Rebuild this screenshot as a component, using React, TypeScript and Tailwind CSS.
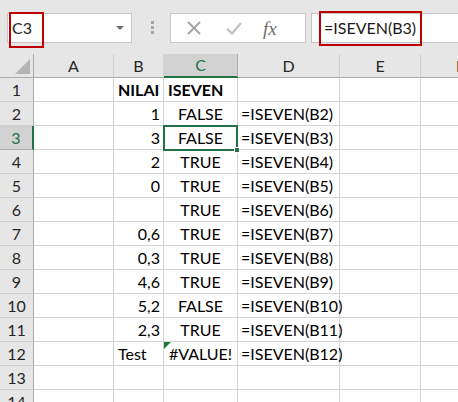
import React from "react";

type Row = {
  n: number;
  b?: string;
  bAlign?: "left" | "right";
  c?: string;
  cAlign?: "left" | "center";
  d?: string;
  bold?: boolean;
  error?: boolean;
};

const rows: Row[] = [
  { n: 1, b: "NILAI", bAlign: "left", c: "ISEVEN", cAlign: "left", bold: true },
  { n: 2, b: "1", c: "FALSE", d: "=ISEVEN(B2)" },
  { n: 3, b: "3", c: "FALSE", d: "=ISEVEN(B3)" },
  { n: 4, b: "2", c: "TRUE", d: "=ISEVEN(B4)" },
  { n: 5, b: "0", c: "TRUE", d: "=ISEVEN(B5)" },
  { n: 6, c: "TRUE", d: "=ISEVEN(B6)" },
  { n: 7, b: "0,6", c: "TRUE", d: "=ISEVEN(B7)" },
  { n: 8, b: "0,3", c: "TRUE", d: "=ISEVEN(B8)" },
  { n: 9, b: "4,6", c: "TRUE", d: "=ISEVEN(B9)" },
  { n: 10, b: "5,2", c: "FALSE", d: "=ISEVEN(B10)" },
  { n: 11, b: "2,3", c: "TRUE", d: "=ISEVEN(B11)" },
  { n: 12, b: "Test", bAlign: "left", c: "#VALUE!", d: "=ISEVEN(B12)", error: true },
  { n: 13 },
  { n: 14 },
];

const cols = ["A", "B", "C", "D", "E", "F"];

const cell = "h-6 border-r border-b border-[#d4d4d4] flex items-end pb-[3px] px-[3px] leading-none whitespace-nowrap overflow-visible";

function Toolbar() {
  return (
    <div className="h-[54px] bg-[#e6e6e6] flex items-start pt-[13px] relative">
      {/* name box */}
      <div className="ml-[7px] w-[125px] h-[30px] bg-white border border-[#c6c6c6] flex items-center pl-[4px] pr-[7px]">
        <span className="text-[16px] text-[#262626] flex-1">C3</span>
        <span className="w-0 h-0 border-l-[4px] border-r-[4px] border-t-[4px] border-l-transparent border-r-transparent border-t-[#6e6e6e]" />
      </div>
      {/* grip */}
      <div className="ml-[19px] mt-[8px] flex flex-col gap-[2px]">
        <span className="w-[3px] h-[3px] bg-[#a6a6a6]" />
        <span className="w-[3px] h-[3px] bg-[#a6a6a6]" />
        <span className="w-[3px] h-[3px] bg-[#a6a6a6]" />
      </div>
      {/* buttons */}
      <div className="ml-[16px] w-[136px] h-[30px] bg-white border border-[#c6c6c6] flex items-center">
        <svg className="ml-[16px]" width="14" height="14" viewBox="0 0 14 14">
          <path d="M1 1 L13 13 M13 1 L1 13" stroke="#a6a6a6" strokeWidth="2" fill="none" />
        </svg>
        <svg className="ml-[25px]" width="16" height="13" viewBox="0 0 16 13">
          <path d="M1 7 L6 11.5 L15 1" stroke="#c3c3c3" strokeWidth="2.4" fill="none" />
        </svg>
        <span className="ml-[21px] italic text-[19px] text-[#6e6e6e] leading-none" style={{ fontFamily: '"Liberation Serif", serif' }}>
          fx
        </span>
      </div>
      {/* formula input */}
      <div className="ml-[5px] flex-1 h-[30px] bg-white border border-[#c6c6c6] border-r-0 flex items-center pl-[12px]">
        <span className="text-[16px] text-[#1a1a1a]">=ISEVEN(B3)</span>
      </div>
      {/* annotation boxes */}
      <div className="absolute left-[9px] top-[12px] w-[35px] h-[36px] border-[2px] border-[#c00000]" />
      <div className="absolute left-[319px] top-[11px] w-[103px] h-[35px] border-[2px] border-[#c00000]" />
    </div>
  );
}

function Sheet() {
  return (
    <div className="grid grid-cols-[34px_80px_50px_74px_102px_81px_80px] w-[501px] relative">
      {/* header row */}
      <div className="h-6 bg-[#e6e6e6] border-r border-b border-[#ababab] relative overflow-hidden">
        <span className="absolute right-[3px] bottom-[3px] w-0 h-0 border-l-[15px] border-t-[15px] border-l-transparent border-t-transparent border-b-0 border-r-0" />
        <svg className="absolute right-[3px] bottom-[3px]" width="15" height="15" viewBox="0 0 15 15">
          <path d="M15 0 L15 15 L0 15 Z" fill="#b4b4b4" />
        </svg>
      </div>
      {cols.map((c) => (
        <div
          key={c}
          className={
            c === "C"
              ? "h-6 bg-[#d2d2d2] border-r border-[#ababab] border-b-2 border-b-[#217346] flex items-center justify-center text-[16px] text-[#217346]"
              : "h-6 bg-[#e6e6e6] border-r border-b border-[#ababab] border-r-[#d0d0d0] flex items-center justify-center text-[16px] text-[#262626]"
          }
        >
          {c}
        </div>
      ))}
      {rows.map((r) => (
        <React.Fragment key={r.n}>
          <div
            className={
              r.n === 3
                ? "h-6 bg-[#d2d2d2] border-r-2 border-r-[#217346] border-b border-[#ababab] flex items-center justify-center text-[16px] text-[#217346]"
                : "h-6 bg-[#e6e6e6] border-r border-b border-[#ababab] border-b-[#d0d0d0] flex items-center justify-center text-[16px] text-[#262626]"
            }
          >
            {r.n}
          </div>
          <div className={cell} />
          <div className={`${cell} ${r.bAlign === "left" ? "justify-start pl-[4px]" : "justify-end"} ${r.bold ? "font-bold" : ""}`}>
            {r.b}
          </div>
          <div className={`${cell} relative ${r.cAlign === "left" ? "justify-start pl-[4px]" : "justify-center"} ${r.bold ? "font-bold" : ""}`}>
            {r.error && (
              <svg className="absolute left-0 top-0" width="7" height="7" viewBox="0 0 7 7">
                <path d="M0 0 L7 0 L0 7 Z" fill="#1e7b34" />
              </svg>
            )}
            {r.c}
          </div>
          <div className={cell}>{r.d}</div>
          <div className={cell} />
          <div className={cell} />
        </React.Fragment>
      ))}
      {/* active cell C3 */}
      <div className="absolute left-[163px] top-[71px] w-[75px] h-[26px] border-2 border-[#217346] pointer-events-none">
        <span className="absolute -right-[4px] -bottom-[4px] w-[6px] h-[6px] bg-[#217346] border border-white" />
      </div>
    </div>
  );
}

export default function App() {
  return (
    <div className="w-[458px] h-[402px] overflow-hidden bg-white text-[16px] text-black" style={{ fontFamily: 'Lato, "Liberation Sans", sans-serif' }}>
      <Toolbar />
      <Sheet />
    </div>
  );
}
